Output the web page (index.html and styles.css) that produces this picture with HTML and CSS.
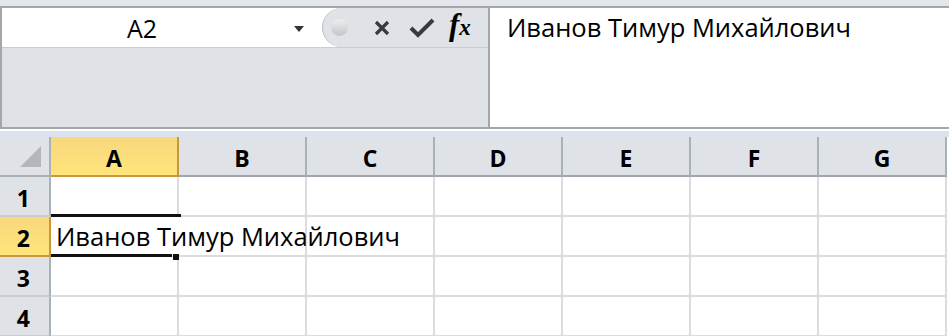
FILE: index.html
```html
<!DOCTYPE html>
<html lang="ru">
<head>
    <meta charset="UTF-8">
    <title>Книга1</title>
    <link rel="stylesheet" href="styles.css">
</head>
<body>

    <!-- строка формул -->
    <div class="formula-area">
        <div class="left-part">
            <div class="name-row">
                <div class="name-box">
                    <span class="cell-ref">A2</span>
                    <span class="drop-arrow"></span>
                </div>
                <div class="tools">
                    <span class="grip"></span>
                    <svg class="ico" width="18" height="18" viewBox="0 0 18 18">
                        <path d="M3 3 L15 15 M15 3 L3 15" stroke="#3a3a3a" stroke-width="3.2" fill="none"/>
                    </svg>
                    <svg class="ico" width="26" height="22" viewBox="0 0 26 22">
                        <path d="M2 11 L9 18 L24 3" stroke="#3a3a3a" stroke-width="4" fill="none"/>
                    </svg>
                    <span class="fx"><i>f</i><i class="x">x</i></span>
                </div>
            </div>
            <div class="name-expand"></div>
        </div>
        <div class="formula-text">Иванов Тимур Михайлович</div>
    </div>

    <div class="divider"></div>

    <!-- сетка листа -->
    <div class="sheet">
        <div class="corner"><span class="tri"></span></div>
        <div class="col-head active">A</div>
        <div class="col-head">B</div>
        <div class="col-head">C</div>
        <div class="col-head">D</div>
        <div class="col-head">E</div>
        <div class="col-head">F</div>
        <div class="col-head">G</div>

        <div class="row-head">1</div>
        <div class="cell"></div><div class="cell"></div><div class="cell"></div><div class="cell"></div><div class="cell"></div><div class="cell"></div><div class="cell"></div>

        <div class="row-head active">2</div>
        <div class="cell selected"><span class="value">Иванов Тимур Михайлович</span><span class="handle"></span></div>
        <div class="cell"></div><div class="cell"></div><div class="cell"></div><div class="cell"></div><div class="cell"></div><div class="cell"></div>

        <div class="row-head">3</div>
        <div class="cell"></div><div class="cell"></div><div class="cell"></div><div class="cell"></div><div class="cell"></div><div class="cell"></div><div class="cell"></div>

        <div class="row-head">4</div>
        <div class="cell"></div><div class="cell"></div><div class="cell"></div><div class="cell"></div><div class="cell"></div><div class="cell"></div><div class="cell"></div>
    </div>

</body>
</html>
```

FILE: styles.css
```css
body {
    margin: 0;
    padding: 0;
    width: 949px;
    height: 336px;
    overflow: hidden;
    background: #fff;
    font-family: 'Open Sans', 'Noto Sans', sans-serif;
    color: #000;
}

/* строка формул */
.formula-area {
    display: flex;
    height: 119px;
    margin-top: 6px;
    border-top: 2px solid #a3a7ac;
    border-bottom: 2px solid #a3a7ac;
    border-left: 2px solid #a3a7ac;
    background: #fff;
    box-shadow: 0 -6px 0 #e3e6ea;
}

.left-part {
    width: 486px;
    display: flex;
    flex-direction: column;
    border-right: 2px solid #a3a7ac;
}

.name-row {
    height: 39px;
    display: flex;
    border-bottom: 1px solid #c9ccd0;
}

.name-box {
    width: 320px;
    background: #fff;
    position: relative;
    display: flex;
    align-items: center;
    padding-left: 125px;
    box-sizing: border-box;
}

.cell-ref {
    font-size: 25px;
}

.drop-arrow {
    position: absolute;
    right: 18px;
    top: 18px;
    border-left: 5px solid transparent;
    border-right: 5px solid transparent;
    border-top: 6px solid #333;
}

.tools {
    flex: 1;
    display: flex;
    align-items: center;
    padding-left: 8px;
    background: #dfe2e7;
    border-radius: 22px 0 0 22px;
    border-left: 1px solid #b9bcc1;
}

.grip {
    width: 17px;
    height: 17px;
    border-radius: 50%;
    background: linear-gradient(#eeeff1, #c2c4c7);
    margin-right: 25px;
}

.ico {
    display: block;
    margin-right: 18px;
}

.fx {
    font-family: 'Liberation Serif', serif;
    font-weight: bold;
    font-size: 31px;
    line-height: 1;
    margin-top: -6px;
    margin-left: -4px;
}

.fx .x {
    font-size: 23px;
}

.name-expand {
    flex: 1;
    background: #dee1e6;
}

.formula-text {
    flex: 1;
    padding: 2px 0 0 17px;
    font-size: 25.5px;
}

.divider {
    height: 6px;
    border-top: 2px solid #fff;
    background: #dde3ee;
}

/* сетка */
.sheet {
    display: grid;
    grid-template-columns: 51px repeat(7, 128px) 1fr;
    grid-auto-rows: 40px;
}

.corner, .col-head, .row-head {
    background: #dfe2e7;
    font-weight: bold;
    font-size: 23px;
    display: flex;
    align-items: center;
    justify-content: center;
    box-sizing: border-box;
}

.corner {
    border-right: 2px solid #a9b0b8;
    border-bottom: 2px solid #a9b0b8;
    position: relative;
}

.tri {
    position: absolute;
    right: 8px;
    bottom: 8px;
    border-left: 21px solid transparent;
    border-bottom: 21px solid #b3b7bc;
}

.col-head {
    border-right: 2px solid #a9b0b8;
    border-bottom: 2px solid #9fa6ae;
    padding-top: 4px;
}

.row-head {
    border-right: 2px solid #a9b0b8;
    border-bottom: 2px solid #c9ccd0;
    justify-content: flex-end;
    padding-right: 19px;
    padding-top: 4px;
    grid-column: 1;
}

.col-head.active,
.row-head.active {
    background: linear-gradient(#f9d77e, #ffe57b);
    border-color: #c8973c;
}

.cell {
    border-right: 2px solid #dadcdf;
    border-bottom: 2px solid #dadcdf;
    box-sizing: border-box;
    position: relative;
}

.cell.selected {
    border-right: none;
    z-index: 1;
}

.cell.selected::before {
    content: "";
    position: absolute;
    left: 0;
    right: -2px;
    top: -3px;
    height: 3px;
    background: #111;
}

.cell.selected::after {
    content: "";
    position: absolute;
    left: 0;
    width: 121px;
    bottom: -2px;
    height: 3px;
    background: #111;
}

.value {
    position: absolute;
    left: 5px;
    top: 2px;
    font-size: 25.5px;
    white-space: nowrap;
}

.handle {
    position: absolute;
    right: 0;
    bottom: -5px;
    width: 6px;
    height: 6px;
    background: #111;
}
```
